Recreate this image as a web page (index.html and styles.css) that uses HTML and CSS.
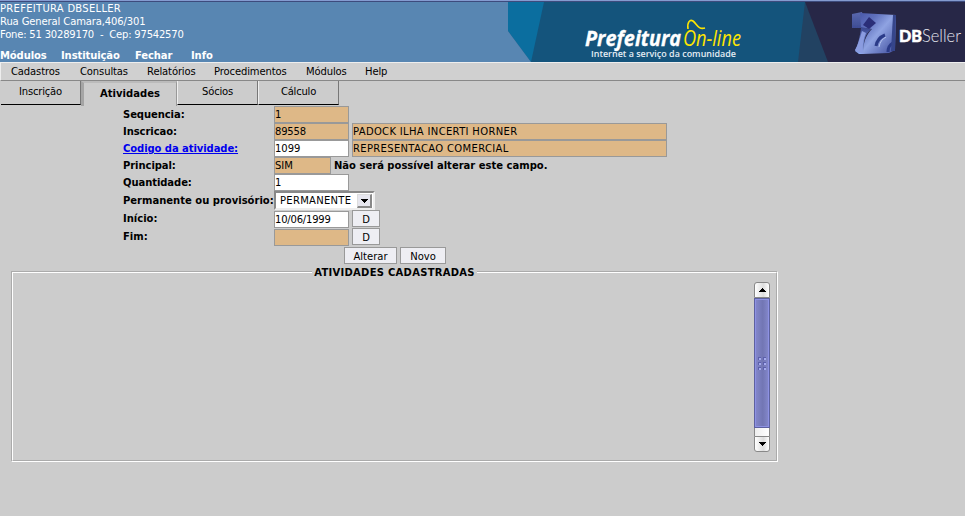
FILE: index.html
```html
<!DOCTYPE html>
<html lang="pt-BR">
<head>
<meta charset="utf-8">
<title>Prefeitura On-line</title>
<link rel="stylesheet" href="styles.css">
</head>
<body>
<header class="header">
  <div class="company">
    <div class="loose">PREFEITURA DBSELLER</div>
    <div class="tight">Rua General Camara,406/301</div>
    <div class="tighter">Fone: 51 30289170 &nbsp;-&nbsp; Cep: 97542570</div>
    <nav class="main-nav"><a>Módulos</a><a>Instituição</a><a>Fechar</a><a>Info</a></nav>
  </div>
  <svg class="banner" width="457" height="60" viewBox="508 2 457 60">
    <defs>
      <linearGradient id="cube" x1="0" y1="0" x2="1" y2="1"><stop offset="0" stop-color="#4a59aa"/><stop offset=".25" stop-color="#5f70bd"/><stop offset=".5" stop-color="#8fa3e2"/><stop offset="1" stop-color="#3d4a9a"/></linearGradient>
      <linearGradient id="side" x1="0" y1="0" x2="0" y2="1"><stop offset="0" stop-color="#5a69ae"/><stop offset=".4" stop-color="#3c4a92"/><stop offset="1" stop-color="#8da9ef"/></linearGradient>
      <filter id="soft"><feGaussianBlur stdDeviation=".6"/></filter>
    </defs>
    <path fill="#14547c" d="M508 2H965V62H508z"/>
    <path fill="#0b6e9f" d="M508 2H544L531 62L508 31z"/>
    <path fill="#5886b2" d="M508 31L531 62H508z"/>
    <path fill="#224262" d="M805 2L798 62H830z"/>
    <path fill="#272747" d="M805 2H965V62H828z"/>
    <text class="logo-name" x="585" y="45.500" textLength="96" lengthAdjust="spacingAndGlyphs">Prefeitura</text>
    <text class="logo-line" x="683" y="45.500" textLength="58" lengthAdjust="spacingAndGlyphs">On-line</text>
    <path d="M688 29C687 22 690 19 693 21C697 24 698 30 705 28" fill="none" stroke="#ffe600" stroke-width="1.600"/>
    <text class="logo-tag" x="591" y="56.500" textLength="145" lengthAdjust="spacingAndGlyphs">Internet a serviço da comunidade</text>
    <g filter="url(#soft)">
      <path fill="url(#side)" d="M852 14L862 12L866 28L872 29C864 34 863 44 864 54H859L855 51C858 45 860 36 861 28H852z"/>
      <path fill="url(#cube)" d="M860 13L896 15L895 50L889 53L863 54C863 42 866 35 872 29L861 27z"/>
      <path fill="#8b9ce0" d="M855 50C858 45 860 38 862 31L866 33C863 40 862 47 863 54z"/>
      <path fill="#2b2d78" d="M869 17L876 23L869 29L863 25z"/>
      <path d="M876 46C877 40 880 37 885 35M888 52C888 47 891 44 893 43" fill="none" stroke="#2c3a88" stroke-width="3"/>
      <path d="M879 47C880 42 882 39 886 37" fill="none" stroke="#b5c4f0" stroke-width="1"/>
      <path fill="#34448b" d="M893 15L896 15L895 51L891 51z"/>
    </g>
    <text class="logo-db" x="899" y="41.500" textLength="23" lengthAdjust="spacingAndGlyphs">DB</text>
    <text class="logo-seller" x="922" y="41.500" textLength="39" lengthAdjust="spacingAndGlyphs">Seller</text>
  </svg>
</header>
<nav class="menu"><a>Cadastros</a><a>Consultas</a><a>Relatórios</a><a>Procedimentos</a><a>Módulos</a><a>Help</a></nav>
<div class="tabs">
  <div class="tab">Inscrição</div>
  <div class="tab active">Atividades</div>
  <div class="tab">Sócios</div>
  <div class="tab">Cálculo</div>
</div>
<main>
  <div class="form">
    <div class="row"><b class="label">Sequencia:</b><span class="field locked">1</span></div>
    <div class="row"><b class="label">Inscricao:</b><span class="field locked tighter">89558</span><span class="field locked wide">PADOCK ILHA INCERTI HORNER</span></div>
    <div class="row"><b class="label"><a class="link">Codigo da atividade:</a></b><span class="field">1099</span><span class="field locked wide">REPRESENTACAO COMERCIAL</span></div>
    <div class="row"><b class="label">Principal:</b><span class="field locked short">SIM</span><b class="note">Não será possível alterar este campo.</b></div>
    <div class="row"><b class="label">Quantidade:</b><span class="field">1</span></div>
    <div class="row select-row"><b class="label full">Permanente ou provisório:</b><span class="select"><span class="loose">PERMANENTE</span><span class="arrow-button"><svg width="7" height="4"><path d="M0 0H7V1H6V2H5V3H4V4H3V3H2V2H1V1H0z"/></svg></span></span></div>
    <div class="row date-row"><b class="label full">Início:</b><span class="field tighter">10/06/1999</span><span class="button day">D</span></div>
    <div class="row date-row"><b class="label full">Fim:</b><span class="field locked"></span><span class="button day">D</span></div>
  </div>
  <div class="actions"><span class="button alter">Alterar</span><span class="button new">Novo</span></div>
  <fieldset class="list">
    <legend>ATIVIDADES CADASTRADAS</legend>
    <div class="scrollbar">
      <div class="scroll-end top"><svg width="7" height="4"><path d="M3 0H4V1H5V2H6V3H7V4H0V3H1V2H2V1H3z"/></svg></div>
      <div class="thumb"><svg width="8" height="13"><g fill="#5c60ac"><path d="M0 0h3v3H0zM5 0h3v3H5zM0 5h3v3H0zM5 5h3v3H5zM0 10h3v3H0zM5 10h3v3H5z"/></g><g fill="#a5aaee"><path d="M1 1h2v2H1zM6 1h2v2H6zM1 6h2v2H1zM6 6h2v2H6zM1 11h2v2H1zM6 11h2v2H6z"/></g></svg></div>
      <div class="track"></div>
      <div class="scroll-end bottom"><svg width="7" height="4"><path d="M0 0H7V1H6V2H5V3H4V4H3V3H2V2H1V1H0z"/></svg></div>
    </div>
  </fieldset>
</main>
</body>
</html>
```
FILE: styles.css
```css
* { box-sizing: border-box; }
body { margin: 0; height: 516px; overflow: hidden; background: #ccc; color: #000; font: 10px/13px "DejaVu Sans", sans-serif; }
.loose { letter-spacing: .28px; }
.tight { letter-spacing: -.12px; }
.tighter { letter-spacing: -.2px; }
.header { display: flex; justify-content: space-between; height: 62px; background: #5886b2; color: #fff; border-top: 1px solid #849bd0; box-shadow: inset 0 1px #3d4b7d; }
.company { padding-top: 1px; white-space: nowrap; }
.banner { display: block; margin-top: 1px; }
.main-nav { display: grid; grid-template-columns: 46px 59px 41px 21px; gap: 15px; margin-top: 8px; font-weight: bold; letter-spacing: -.1px; }
.logo-name { font: italic bold 21px "Open Sans", sans-serif; fill: #fff; stroke: #fff; stroke-width: .3px; }
.logo-line { font: italic 21px "Open Sans", sans-serif; fill: #ffe600; }
.logo-tag { font: 600 9px "Open Sans", sans-serif; fill: #e4edf4; }
.logo-db { font: 900 17px Lato, sans-serif; fill: #fff; stroke: #fff; stroke-width: .5px; }
.logo-seller { font: 300 17px Lato, sans-serif; fill: #e5e5ed; }
.menu { display: grid; grid-template-columns: 50px 48px 48px 73px 40px 22px; align-items: center; gap: 19px; height: 19px; padding-left: 10px; letter-spacing: -.12px; background: #d0d0d0; border-top: 1px solid #eee; border-left: 1px solid #eee; border-bottom: 1px solid #888; }
.tabs { display: flex; height: 25px; padding-left: 1px; }
.tab { width: 81px; height: 24px; padding-top: 4px; text-align: center; letter-spacing: -.2px; border-right: 1px solid #777; border-bottom: 1px solid #000; border-left: 1px solid #eee; }
.tab:first-child { width: 80px; border-left: 0; }
.tab.active { width: 96px; height: 25px; padding-top: 4px; font-weight: bold; letter-spacing: .05px; border-left: 3px solid #a5a5a5; border-top: 2px solid #bbb; border-right: 1px solid #999; border-bottom: 0; }
.form { padding-left: 123px; }
.row { display: flex; height: 17px; }
.label { width: 151px; padding-top: 2px; white-space: nowrap; letter-spacing: -.07px; }
.label.full { letter-spacing: 0; }
.link { color: #00e; text-decoration: underline; }
.field { width: 75px; height: 17px; padding: 1px 0 0; border: 1px solid #999; background: #fff; white-space: nowrap; }
.field.locked { background: #deb887; }
.field.wide { width: 315px; margin-left: 3px; letter-spacing: .33px; }
.field.short { width: 57px; }
.note { margin-left: 3px; padding-top: 2px; }
.select-row { height: 19px; }
.select-row .label { padding-top: 3px; }
.select { display: flex; justify-content: space-between; width: 101px; height: 19px; padding: 1px 1px 1px 4px; background: #fff; border: 2px solid; border-color: #888 #eee #eee #888; }
.arrow-button { display: flex; align-items: center; justify-content: center; width: 15px; height: 14px; background: #e6e6ee; border: solid; border-width: 1px 2px 2px 1px; border-color: #ddd #888 #888 #ddd; }
.date-row { height: 18px; }
.date-row .field { margin-top: 1px; }
.button { display: flex; align-items: center; justify-content: center; height: 17px; background: #eeeef3; border: 1px solid #999; }
.day { width: 28px; margin-left: 3px; padding-top: 1px; }
.actions { display: flex; gap: 3px; padding: 1px 0 0 344px; }
.alter { width: 53px; padding-top: 2px; }
.new { width: 46px; padding-top: 2px; }
.list { width: 767px; height: 196px; margin: 2px 0 0 11px; padding: 4px 6px 8px; border: 2px groove #fff; display: flex; justify-content: flex-end; }
.list legend { height: 12px; margin: 0 auto; padding: 0 2px; font-weight: bold; letter-spacing: .27px; }
.scrollbar { display: flex; flex-direction: column; width: 16px; height: 170px; }
.scroll-end { display: flex; align-items: center; justify-content: center; height: 16px; background: linear-gradient(90deg, #fff, #ddd 60%, #fff); border: 1px solid #888; }
.top { border-radius: 3px 3px 0 0; }
.bottom { border-radius: 0 0 3px 3px; }
.thumb { display: flex; align-items: center; justify-content: center; height: 130px; background: linear-gradient(90deg, #8488cc, #7276b4 55%, #8589cd); border: 1px solid #5d619f; box-shadow: inset 0 0 0 1px #8d91e3; }
.track { height: 8px; background: linear-gradient(90deg, #eee, #fff); border: solid #888; border-width: 0 1px; }
```
